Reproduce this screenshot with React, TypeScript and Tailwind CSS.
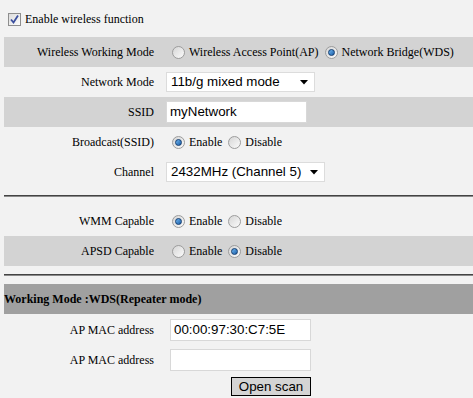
import React from "react";

const serif = "font-['Liberation_Serif','Times_New_Roman',serif]";
const sans = "font-['Liberation_Sans',Arial,sans-serif]";

function Radio({ checked }: { checked?: boolean }) {
  return (
    <span className="inline-flex h-[13px] w-[13px] shrink-0 items-center justify-center rounded-full border border-[#9c9c9c] bg-gradient-to-br from-[#d6d6d6] to-[#fbfbfb]">
      {checked && (
        <span className="h-[7px] w-[7px] rounded-full border border-[#123c70] bg-gradient-to-br from-[#6fb6f0] to-[#1a5fa8]" />
      )}
    </span>
  );
}

function Option({ checked, label }: { checked?: boolean; label: string }) {
  return (
    <span className="inline-flex items-center gap-[4px]">
      <Radio checked={checked} />
      <span>{label}</span>
    </span>
  );
}

function Select({ value, width }: { value: string; width: string }) {
  return (
    <div
      className={`flex h-[20px] items-center justify-between border border-[#dcdcdc] bg-white pl-[4px] pr-[6px] text-[13.33px] text-black ${sans} ${width}`}
    >
      <span>{value}</span>
      <svg width="8" height="5" viewBox="0 0 8 5">
        <path d="M0 0h8L4 4.5z" fill="#000" />
      </svg>
    </div>
  );
}

function TextBox({ value, width }: { value?: string; width: string }) {
  return (
    <div
      className={`flex h-[22px] items-center border border-[#d8d8d8] bg-white px-[3px] text-[13.33px] text-black ${sans} ${width}`}
    >
      {value}
    </div>
  );
}

function Row({ label, gray, children }: { label: string; gray?: boolean; children: React.ReactNode }) {
  return (
    <div className={`flex h-[30px] items-center ${gray ? "bg-[#d3d3d3]" : ""}`}>
      <div className="w-[156px] pr-[6px] text-right">{label}</div>
      <div className="flex items-center gap-[6px] pl-[12px]">{children}</div>
    </div>
  );
}

function Rule() {
  return (
    <div className="my-[8px]">
      <div className="h-px bg-[#444]" />
      <div className="h-px bg-[#8a8a8a]" />
    </div>
  );
}

export default function App() {
  return (
    <div className={`h-[398px] w-full overflow-hidden bg-[#f2f2f2] pl-[4px] text-[12px] text-black ${serif}`}>
      <div className="flex h-[37px] items-center gap-[4px] pl-[4px] pt-[1px]">
        <span className="flex h-[13px] w-[13px] items-center justify-center border border-[#8e8e8e] bg-gradient-to-br from-[#dcdcdc] to-[#fdfdfd]">
          <svg width="11" height="11" viewBox="0 0 11 11">
            <path d="M2 5.5l2.5 3L9 1.5" stroke="#3b4f9e" strokeWidth="1.8" fill="none" />
          </svg>
        </span>
        <span>Enable wireless function</span>
      </div>

      <Row label="Wireless Working Mode" gray>
        <Option label="Wireless Access Point(AP)" />
        <Option label="Network Bridge(WDS)" checked />
      </Row>
      <Row label="Network Mode">
        <div className="-ml-[6px]">
          <Select value="11b/g mixed mode" width="w-[149px]" />
        </div>
      </Row>
      <Row label="SSID" gray>
        <div className="-ml-[6px]">
          <TextBox value="myNetwork" width="w-[141px]" />
        </div>
      </Row>
      <Row label="Broadcast(SSID)">
        <Option label="Enable" checked />
        <Option label="Disable" />
      </Row>
      <Row label="Channel">
        <div className="-ml-[6px]">
          <Select value="2432MHz (Channel 5)" width="w-[159px]" />
        </div>
      </Row>

      <Rule />
      <div className="h-[1px]" />

      <Row label="WMM Capable">
        <Option label="Enable" checked />
        <Option label="Disable" />
      </Row>
      <Row label="APSD Capable" gray>
        <Option label="Enable" />
        <Option label="Disable" checked />
      </Row>

      <Rule />

      <div className="flex h-[30px] items-center bg-[#a0a0a0] font-bold">Working Mode :WDS(Repeater mode)</div>

      <div className="mt-[5px] flex h-[22px] items-center">
        <div className="w-[156px] pr-[6px] text-right">AP MAC address</div>
        <div className="pl-[10px]">
          <TextBox value="00:00:97:30:C7:5E" width="w-[141px]" />
        </div>
      </div>
      <div className="mt-[8px] flex h-[22px] items-center">
        <div className="w-[156px] pr-[6px] text-right">AP MAC address</div>
        <div className="pl-[10px]">
          <TextBox width="w-[141px]" />
        </div>
      </div>
      <div className="mt-[6px] flex pl-[227px]">
        <div className={`flex h-[19px] w-[80px] items-center justify-center border border-black bg-[#d4d4d4] text-[13.33px] ${sans}`}>
          Open scan
        </div>
      </div>
    </div>
  );
}
